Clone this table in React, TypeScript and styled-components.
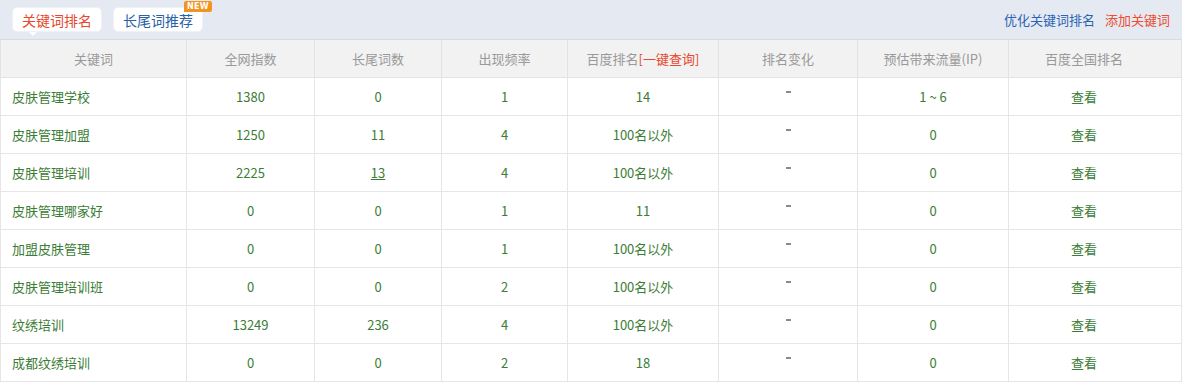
import React from "react";
import styled, { createGlobalStyle } from "styled-components";

const Global = createGlobalStyle`
  html, body { margin: 0; padding: 0; background: #fff; }
  body { font-family: "Noto Sans CJK SC", "Noto Sans", sans-serif; font-size: 13px; }
`;

const Page = styled.div`
  width: 1182px;
`;

const TopBar = styled.div`
  height: 40px;
  background: #e4e9f2;
  display: flex;
  align-items: flex-start;
  justify-content: space-between;
  padding: 0 12px;
  box-sizing: border-box;
  border-bottom: 1px solid #d6dbe4;
`;

const Tabs = styled.div`
  display: flex;
  gap: 11px;
  padding-top: 7px;
`;

const Tab = styled.div<{ $active?: boolean }>`
  position: relative;
  height: 25px;
  line-height: 25px;
  padding: 0 9px;
  background: #fff;
  border: 1px solid #eef1f6;
  box-sizing: border-box;
  border-radius: 5px;
  font-size: 14px;
  color: ${(p) => (p.$active ? "#e8472b" : "#2b5fa8")};
  ${(p) =>
    p.$active &&
    `&::after {
      content: "";
      position: absolute;
      left: 16px;
      bottom: -5px;
      border-left: 4px solid transparent;
      border-right: 4px solid transparent;
      border-top: 4px solid #fff;
    }`}
`;

const Badge = styled.span`
  position: absolute;
  right: -10px;
  top: -7px;
  background: #f39422;
  color: #fff;
  font-family: "DejaVu Sans", sans-serif;
  font-size: 8px;
  font-weight: bold;
  line-height: 11px;
  padding: 0 3px;
  border-radius: 2px 2px 2px 0;
  letter-spacing: 0.3px;
`;

const Links = styled.div`
  display: flex;
  gap: 10px;
  padding-top: 11px;
  font-size: 13px;
  line-height: 18px;
`;

const Link = styled.span<{ $red?: boolean }>`
  color: ${(p) => (p.$red ? "#ef4b2f" : "#2b64b5")};
`;

const Table = styled.table`
  border-collapse: collapse;
  table-layout: fixed;
  width: 1181px;
`;

const Th = styled.th<{ $pr?: number }>`
  height: 37px;
  background: #f2f2f2;
  color: #999;
  font-weight: normal;
  font-size: 13px;
  border: 1px solid #e3e3e3;
  border-top: none;
  text-align: center;
  padding: 0 ${(p) => p.$pr ?? 0}px 0 0;
`;

const Td = styled.td<{ $left?: boolean; $pr?: number }>`
  height: 37px;
  border: 1px solid #e6e6e6;
  color: #3b7d35;
  font-size: 13px;
  text-align: ${(p) => (p.$left ? "left" : "center")};
  padding: 0 ${(p) => p.$pr ?? 0}px 0 ${(p) => (p.$left ? 11 : 0)}px;
`;

const Red = styled.span`
  color: #e8472b;
`;

const Under = styled.span`
  text-decoration: underline;
`;

const Dash = styled.span`
  display: inline-block;
  width: 5px;
  height: 2px;
  background: #8a8a8a;
  position: relative;
  top: -9px;
`;

const widths = [186, 128, 127, 126, 151, 139, 151, 173];

type Row = [string, string, string, string, string, string];
const rows: Row[] = [
  ["皮肤管理学校", "1380", "0", "1", "14", "1 ~ 6"],
  ["皮肤管理加盟", "1250", "11", "4", "100名以外", "0"],
  ["皮肤管理培训", "2225", "13", "4", "100名以外", "0"],
  ["皮肤管理哪家好", "0", "0", "1", "11", "0"],
  ["加盟皮肤管理", "0", "0", "1", "100名以外", "0"],
  ["皮肤管理培训班", "0", "0", "2", "100名以外", "0"],
  ["纹绣培训", "13249", "236", "4", "100名以外", "0"],
  ["成都纹绣培训", "0", "0", "2", "18", "0"],
];

export default function App() {
  return (
    <Page>
      <Global />
      <TopBar>
        <Tabs>
          <Tab $active>关键词排名</Tab>
          <Tab>
            长尾词推荐
            <Badge>NEW</Badge>
          </Tab>
        </Tabs>
        <Links>
          <Link>优化关键词排名</Link>
          <Link $red>添加关键词</Link>
        </Links>
      </TopBar>
      <Table>
        <colgroup>
          {widths.map((w, i) => (
            <col key={i} style={{ width: w }} />
          ))}
        </colgroup>
        <thead>
          <tr>
            <Th>关键词</Th>
            <Th>全网指数</Th>
            <Th>长尾词数</Th>
            <Th>出现频率</Th>
            <Th>
              百度排名<Red>[一键查询]</Red>
            </Th>
            <Th>排名变化</Th>
            <Th>预估带来流量(IP)</Th>
            <Th $pr={22}>百度全国排名</Th>
          </tr>
        </thead>
        <tbody>
          {rows.map((r, i) => (
            <tr key={i}>
              <Td $left>{r[0]}</Td>
              <Td>{r[1]}</Td>
              <Td>{r[2] === "13" ? <Under>13</Under> : r[2]}</Td>
              <Td>{r[3]}</Td>
              <Td>{r[4]}</Td>
              <Td>
                <Dash />
              </Td>
              <Td>{r[5]}</Td>
              <Td $pr={22}>查看</Td>
            </tr>
          ))}
        </tbody>
      </Table>
    </Page>
  );
}
